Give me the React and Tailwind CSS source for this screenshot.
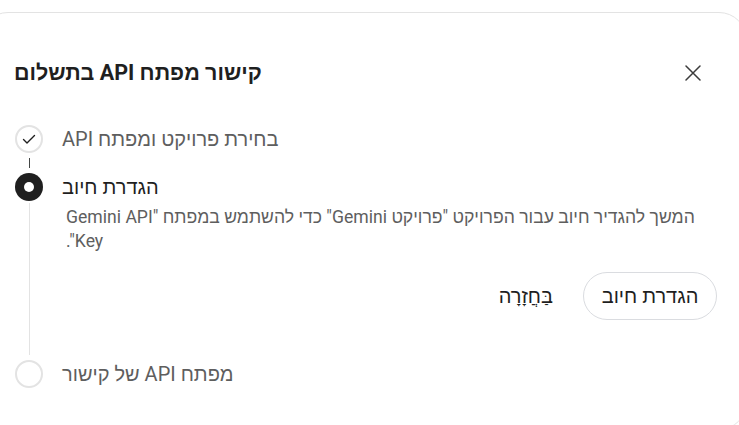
import React from "react";

const font = { fontFamily: "Roboto, 'Liberation Sans', sans-serif" };

export default function App() {
  return (
    <div className="w-[739px] h-[425px] overflow-hidden bg-white" style={font}>
      <div className="mt-[12px] ml-[-20px] w-[767px] h-[418px] rounded-[28px] border border-[#e3e3e3] bg-white pt-[40px] pl-[33px] pr-[29px]">
        {/* header */}
        <div className="flex items-center justify-between h-[40px]">
          <h1 dir="rtl" className="text-[21.5px] font-bold text-[#1f1f1f] leading-none">
            קישור מפתח API בתשלום
          </h1>
          <button className="w-[48px] h-[40px] flex items-center justify-center">
            <svg width="16" height="16" viewBox="0 0 16 16" fill="none" stroke="#3c3c3c" strokeWidth="1.5" strokeLinecap="round">
              <path d="M1 1 15 15M15 1 1 15" />
            </svg>
          </button>
        </div>

        {/* steps */}
        <div className="mt-[32px] flex flex-col">
          {/* step 1 */}
          <div className="flex items-center gap-[18px] h-[28px]">
            <div className="w-[30px] flex justify-center">
              <div className="w-[28px] h-[28px] rounded-full border-2 border-[#e3e3e3] flex items-center justify-center">
                <svg width="16" height="16" viewBox="0 0 16 16" fill="none" stroke="#1f1f1f" strokeWidth="1.4" strokeLinecap="round" strokeLinejoin="round">
                  <path d="M2.5 8.5 6 12l7.5-7.5" />
                </svg>
              </div>
            </div>
            <span dir="rtl" className="text-[20px] text-[#5e5e5e] leading-none">בחירת פרויקט ומפתח API</span>
          </div>

          {/* connector */}
          <div className="w-[30px] h-[20px] flex justify-center py-[5px]">
            <div className="w-px h-full bg-[#444746]" />
          </div>

          {/* step 2 */}
          <div className="flex gap-[18px]">
            <div className="w-[30px] flex flex-col items-center">
              <div className="w-[28px] h-[28px] rounded-full bg-[#1f1f1f] flex items-center justify-center shrink-0">
                <div className="w-[10px] h-[10px] rounded-full bg-white" />
              </div>
              <div className="w-px flex-1 bg-[#e3e3e3] mt-[2px] mb-[5px]" />
            </div>
            <div className="flex-1 flex flex-col pb-[40px]">
              <div className="h-[28px] flex items-center">
                <span dir="rtl" className="text-[20px] text-[#1f1f1f] leading-none">הגדרת חיוב</span>
              </div>
              <p dir="rtl" className="mt-[4px] text-left text-[17.6px] leading-[24px] text-[#5e5e5e] pl-[4px] pr-[6px]">
                המשך להגדיר חיוב עבור הפרויקט "פרויקט Gemini" כדי להשתמש במפתח "Gemini API Key".
              </p>
              <div className="mt-[19px] flex justify-end items-center gap-[8px]">
                <button dir="rtl" className="h-[48px] px-[22px] text-[20px] text-[#1f1f1f] rounded-full">
                  בַּחֲזָרָה
                </button>
                <button dir="rtl" className="h-[48px] w-[134px] rounded-full border border-[#dadce0] text-[20px] text-[#1f1f1f] flex items-center justify-center">
                  הגדרת חיוב
                </button>
              </div>
            </div>
          </div>

          {/* step 3 */}
          <div className="flex items-center gap-[18px] h-[28px]">
            <div className="w-[30px] flex justify-center">
              <div className="w-[28px] h-[28px] rounded-full border-2 border-[#e3e3e3]" />
            </div>
            <span dir="rtl" className="text-[20px] text-[#5e5e5e] leading-none">מפתח API של קישור</span>
          </div>
        </div>
      </div>
    </div>
  );
}
